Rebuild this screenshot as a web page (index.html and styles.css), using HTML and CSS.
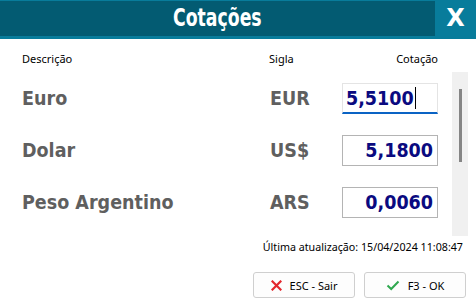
FILE: index.html
```html
<!DOCTYPE html>
<html lang="pt-BR">
<head>
<meta charset="utf-8">
<title>Cotações</title>
<link rel="stylesheet" href="styles.css">
</head>
<body>
<div class="window">
  <header class="titlebar">
    <div class="title"><span class="title-text">Cotações</span></div>
    <div class="close">X</div>
  </header>

  <div class="colheads">
    <span class="ch-desc">Descrição</span>
    <span class="ch-sigla">Sigla</span>
    <span class="ch-cot">Cotação</span>
  </div>

  <div class="list">
    <div class="rows">
      <div class="row">
        <span class="desc">Euro</span>
        <span class="sigla">EUR</span>
        <div class="field focused"><span class="val">5,5100</span><span class="caret"></span></div>
      </div>
      <div class="row">
        <span class="desc">Dolar</span>
        <span class="sigla">US$</span>
        <div class="field"><span class="val">5,1800</span></div>
      </div>
      <div class="row">
        <span class="desc">Peso Argentino</span>
        <span class="sigla">ARS</span>
        <div class="field"><span class="val">0,0060</span></div>
      </div>
    </div>
    <div class="scrollbar"><div class="thumb"></div></div>
  </div>

  <div class="updated">Última atualização: 15/04/2024 11:08:47</div>

  <div class="buttons">
    <button class="btn">
      <svg width="11" height="11" viewBox="0 0 11 11"><path d="M1.5 1.5 L9.5 9.5 M9.5 1.5 L1.5 9.5" stroke="#e3262c" stroke-width="2.2" stroke-linecap="square" fill="none"/></svg>
      <span>ESC - Sair</span>
    </button>
    <button class="btn">
      <svg width="14" height="11" viewBox="0 0 14 11"><path d="M1.5 5.5 L5.2 9 L12.5 1.5" stroke="#2fa84f" stroke-width="2" fill="none"/></svg>
      <span>F3 - OK</span>
    </button>
  </div>
</div>
</body>
</html>
```

FILE: styles.css
```css
html, body {
  margin: 0;
  padding: 0;
  background: #ffffff;
}

.window {
  width: 476px;
  height: 306px;
  font-family: "Noto Sans", "Open Sans", sans-serif;
  color: #000;
}

.titlebar {
  display: flex;
  height: 35px;
  border-top: 1px solid #087c9b;
  border-bottom: 3px solid #087c9b;
}

.title {
  flex: 1;
  background: #035b72;
  display: flex;
  align-items: center;
  justify-content: center;
}

.title-text {
  font-family: "DejaVu Sans Condensed", "DejaVu Sans", sans-serif;
  font-weight: bold;
  font-size: 24px;
  color: #ffffff;
  display: inline-block;
  transform: scaleX(0.8);
  line-height: 35px;
}

.close {
  width: 41px;
  background: #087c9b;
  color: #fff;
  font-family: "DejaVu Sans", sans-serif;
  font-weight: bold;
  font-size: 24px;
  display: flex;
  align-items: center;
  justify-content: center;
  line-height: 35px;
}

.colheads {
  display: flex;
  margin-top: 12px;
  padding-left: 22px;
  font-size: 11px;
  line-height: 16px;
  height: 16px;
}

.ch-desc { width: 247px; }
.ch-sigla { width: 72px; }
.ch-cot { width: 97px; text-align: right; }

.list {
  display: flex;
  margin-top: 5px;
  height: 164px;
}

.rows {
  padding-top: 11px;
  padding-left: 22px;
  width: 416px;
  display: flex;
  flex-direction: column;
  gap: 21px;
}

.row {
  display: flex;
  align-items: center;
  height: 31px;
  font-family: "DejaVu Sans Condensed", "DejaVu Sans", sans-serif;
  font-weight: bold;
  font-size: 19.5px;
}

.desc {
  width: 248px;
  color: #5f5f5f;
}

.sigla {
  width: 72px;
  color: #5f5f5f;
}

.field {
  box-sizing: border-box;
  width: 96px;
  height: 31px;
  border: 1px solid #b4b4b4;
  display: flex;
  align-items: center;
  justify-content: flex-end;
  padding: 0 4px;
  color: #0a0a80;
}

.field.focused {
  border: 1px solid #e4e4e4;
  border-bottom: 2px solid #0a63c4;
  justify-content: flex-start;
  padding-left: 3px;
}

.caret {
  width: 1px;
  height: 22px;
  background: #000;
  margin-left: 1px;
}

.scrollbar {
  margin-left: 14px;
  width: 16px;
  height: 164px;
  background: #f0f0f0;
}

.thumb {
  margin: 17px auto 0;
  width: 3px;
  height: 73px;
  background: #858585;
}

.updated {
  margin-top: 3px;
  padding-right: 13px;
  text-align: right;
  font-size: 10.7px;
  line-height: 16px;
}

.buttons {
  display: flex;
  justify-content: flex-end;
  gap: 9px;
  padding-right: 10px;
  margin-top: 17px;
}

.btn {
  box-sizing: border-box;
  width: 102px;
  height: 26px;
  border: 1px solid #cfcfcf;
  border-radius: 3px;
  background: #fdfdfd;
  font-family: "Noto Sans", "Open Sans", sans-serif;
  font-size: 11px;
  color: #000;
  display: flex;
  align-items: center;
  justify-content: center;
  gap: 8px;
  padding: 0;
}
```
